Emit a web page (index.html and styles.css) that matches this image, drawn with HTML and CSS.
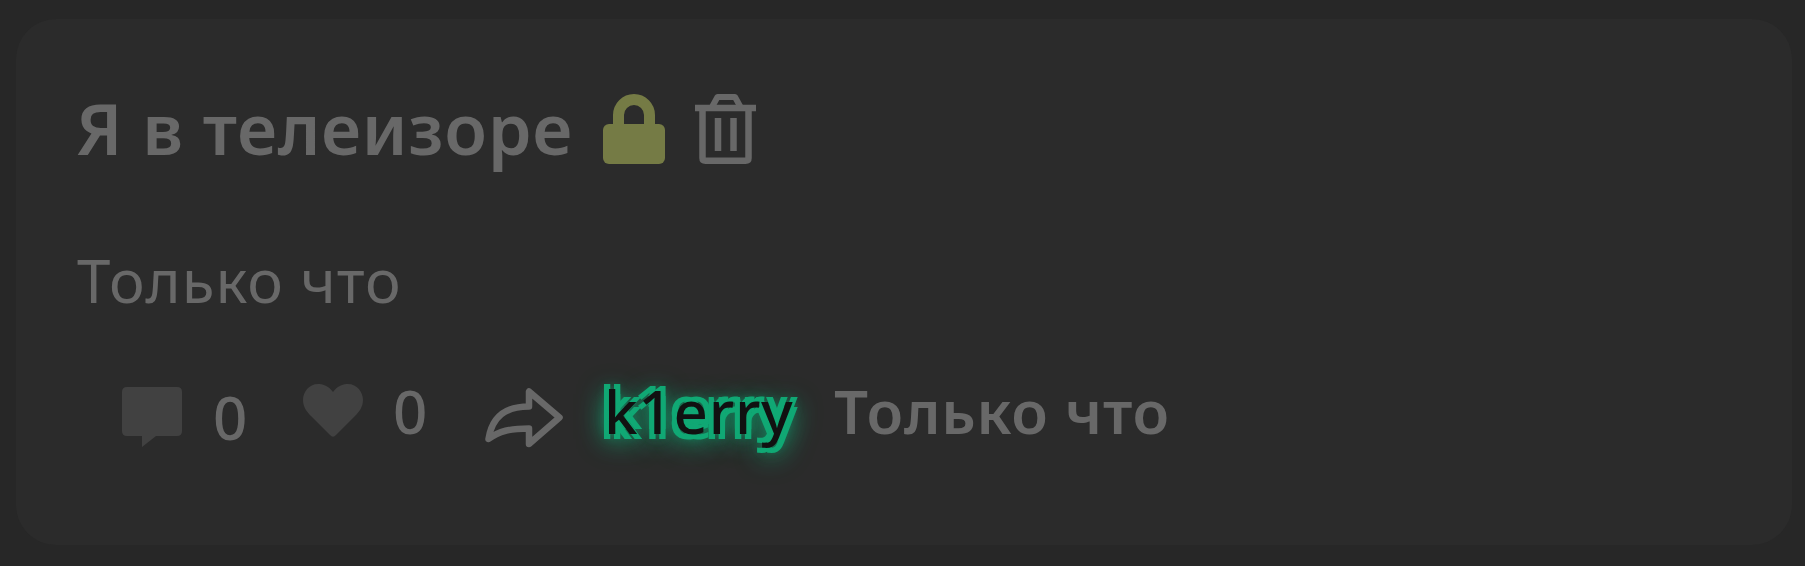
FILE: index.html
```
<!DOCTYPE html>
<html lang="ru">
<head>
    <meta charset="UTF-8">
    <meta name="viewport" content="width=device-width, initial-scale=1.0">
    <title>Я в телеизоре</title>
    <link rel="stylesheet" href="styles.css">
</head>
<body>
    <div class="post">
        <div class="post-header">
            <h1 class="post-title">Я в телеизоре</h1>
            <svg class="icon-lock" width="62" height="70" viewBox="0 0 62 70">
                <path d="M15.500 36V21a15.500 15.500 0 0 1 31 0V36" fill="none" stroke="currentColor" stroke-width="11"/>
                <rect x="0" y="30" width="62" height="40" rx="6" fill="currentColor"/>
            </svg>
            <svg class="icon-trash" width="62" height="70" viewBox="0 0 62 70" fill="none" stroke="currentColor">
                <path d="M17 13L22.500 3H40L45.500 13" stroke-width="6" stroke-linejoin="round"/>
                <path d="M0 14H61" stroke-width="6.500"/>
                <path d="M7.500 14V64Q7.500 66.700 10.500 66.700H50.500Q53.500 66.700 53.500 64V14" stroke-width="6.500"/>
                <path d="M23 24V57M38.500 24V57" stroke-width="6.500"/>
            </svg>
        </div>

        <div class="post-text">Только что</div>

        <div class="post-footer">
            <button class="action comments">
                <svg width="60" height="61" viewBox="0 0 60 61" fill="currentColor">
                    <path d="M5 0H55Q60 0 60 5V44Q60 49 55 49H34L20 60V49H5Q0 49 0 44V5Q0 0 5 0Z"/>
                </svg>
                <span class="count">0</span>
            </button>
            <button class="action likes">
                <svg width="60" height="54" viewBox="0 0 60 54" fill="currentColor">
                    <path d="M30 8C25 1 19 0 15 0C6 0 0 8 0 16C0 23 4 28 8 32L27 51Q30 54.500 33 51L52 32C56 28 60 23 60 16C60 8 54 0 45 0C41 0 35 1 30 8Z"/>
                </svg>
                <span class="count">0</span>
            </button>
            <button class="action share">
                <svg width="78" height="60" viewBox="0 0 78 60" fill="none" stroke="currentColor" stroke-width="6.500" stroke-linejoin="round">
                    <path d="M44 3.500V18.500C20 18.500 7 29 3.500 51C14 43 25 40.500 44 40.500V56L74.500 29.500Z"/>
                </svg>
            </button>
            <a class="author">k1erry</a>
            <span class="date">Только что</span>
        </div>
    </div>
</body>
</html>
```
FILE: styles.css
```
* {
    box-sizing: border-box;
}
body {
    margin: 0;
    padding: 19px 13px 21px 16px;
    height: 566px;
    background-color: #272727;
    color: #686868;
    font-family: "Noto Sans", "Open Sans", sans-serif;
    overflow: hidden;
}
.post {
    height: 526px;
    padding: 75px 60px 0;
    border-radius: 40px;
    background-color: #2b2b2b;
}
svg {
    display: block;
    flex: none;
}
.post-header {
    display: flex;
    height: 70px;
}
.post-title {
    width: 527px;
    margin: -1px 0 0;
    font-size: 70px;
    line-height: 70px;
    font-weight: 600;
    letter-spacing: 0.7px;
    white-space: nowrap;
}
.icon-lock {
    color: #757b45;
}
.icon-trash {
    margin-left: 30px;
}
.post-text {
    margin-top: 86px;
    padding-left: 1px;
    font-size: 60px;
    line-height: 60px;
    letter-spacing: 1px;
}
.post-footer {
    display: flex;
    align-items: flex-start;
    margin-top: 71px;
    padding-left: 46px;
    font-size: 60px;
    line-height: 60px;
    font-weight: 500;
    white-space: nowrap;
}
.action {
    display: flex;
    align-items: flex-start;
    padding: 0;
    border: none;
    background: none;
    color: #414141;
    font: inherit;
    cursor: pointer;
}
.count {
    color: #686868;
}
.comments {
    width: 181px;
    gap: 31px;
    padding-top: 6px;
}
.likes {
    width: 182px;
    gap: 30px;
    padding-top: 3px;
}
.likes .count {
    margin-top: -3px;
}
.share {
    width: 119px;
    padding-top: 7px;
    color: #686868;
}
.author {
    width: 230px;
    color: #111;
    letter-spacing: 0.8px;
    text-shadow: -5px -5px 0 #10a874, 5px -5px 0 #10a874, -5px 5px 0 #10a874, 5px 5px 0 #10a874, 0 0 12px #10a874, 0 5px 25px #10a874, 0 5px 30px #10a874;
}
.date {
    font-weight: 600;
    letter-spacing: 0.8px;
}
```
